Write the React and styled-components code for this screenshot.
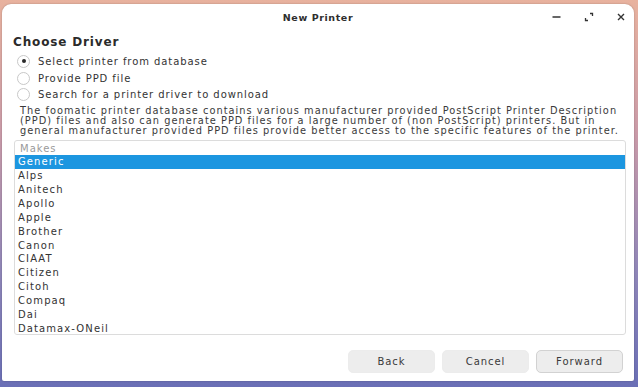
import React from "react";
import styled, { createGlobalStyle } from "styled-components";

const Global = createGlobalStyle`
  html, body { margin: 0; padding: 0; }
  body {
    width: 638px; height: 387px; overflow: hidden;
    background: linear-gradient(180deg, #e8b29e 0%, #c99aa8 35%, #8f86b8 70%, #6a6fb6 100%);
    font-family: "DejaVu Sans", "Liberation Sans", sans-serif;
  }
`;

const Desktop = styled.div`
  width: 638px; height: 387px;
  box-sizing: border-box;
  padding: 4px 4px 6px 2px;
  display: flex;
`;

const Window = styled.div`
  flex: 1;
  background: #ffffff;
  border-radius: 9px 9px 2px 2px;
  display: flex; flex-direction: column;
  box-shadow: 0 0 2px rgba(0,0,0,0.25);
  overflow: hidden;
`;

const TitleBar = styled.div`
  height: 25px;
  display: grid;
  grid-template-columns: 1fr auto 1fr;
  align-items: center;
  padding: 0 8px;
`;

const Title = styled.div`
  grid-column: 2;
  font-size: 9.5px; font-weight: bold; color: #2e2e2e;
  letter-spacing: 0.6px;
  padding-top: 1px;
`;

const Controls = styled.div`
  grid-column: 3;
  justify-self: end;
  display: flex; align-items: center; gap: 23px;
  padding-right: 1px;
  padding-top: 1px;
`;

const Body = styled.div`
  flex: 1;
  display: flex; flex-direction: column;
  padding: 6px 8px 0 11px;
`;

const Heading = styled.div`
  font-size: 12px; font-weight: bold; color: #2b2b2b;
  letter-spacing: 0.85px;
  margin-bottom: 4px;
`;

const RadioRow = styled.label`
  display: flex; align-items: center; gap: 8px;
  height: 16.7px; padding-left: 4px;
  font-size: 10px; letter-spacing: 0.93px; color: #333;
`;

const RadioDot = styled.span`
  width: 13px; height: 13px; border-radius: 50%;
  border: 1px solid #c8c8c8; background: #fff;
  display: flex; align-items: center; justify-content: center;
  box-sizing: border-box;
  &::after {
    content: "";
    width: 4px; height: 4px; border-radius: 50%;
    background: ${p => (p.$on ? "#2a2a2a" : "transparent")};
  }
`;

const Desc = styled.p`
  margin: 3px 0 0 7px;
  font-size: 9.8px; line-height: 10px; color: #3a3a3a;
  letter-spacing: 1.03px;
  white-space: nowrap;
`;

const ListBox = styled.div`
  margin: 4px 0 0 1px;
  border: 1px solid #dcdcdc;
  border-radius: 3px;
  height: 195px;
  box-sizing: border-box;
  overflow: hidden;
`;

const ListHeader = styled.div`
  height: 14px; line-height: 15px;
  padding-left: 5px;
  font-size: 10px; letter-spacing: 1px; color: #9a9a9a;
`;

const Row = styled.div`
  height: 13.92px; line-height: 14.5px;
  padding-left: 3px;
  font-size: 10px; letter-spacing: 1.1px;
  color: ${p => (p.$sel ? "#ffffff" : "#333")};
  background: ${p => (p.$sel ? "#1c96e0" : "transparent")};
`;

const Footer = styled.div`
  display: flex; justify-content: flex-end; gap: 7px;
  padding: 15px 0 0 0;
  margin-right: 3px;
`;

const Button = styled.button`
  width: 87px; height: 23px;
  border-radius: 5px;
  border: 1px solid ${p => (p.$outlined ? "#d2d2d2" : "#ececec")};
  background: #ededed;
  font-family: "DejaVu Sans", sans-serif;
  font-size: 10px; letter-spacing: 0.95px; color: #3a3a3a;
  padding: 0;
`;

const makes = ["Generic", "Alps", "Anitech", "Apollo", "Apple", "Brother", "Canon", "CIAAT", "Citizen", "Citoh", "Compaq", "Dai", "Datamax-ONeil"];

export default function App() {
  return (
    <>
      <Global />
      <Desktop>
        <Window>
          <TitleBar>
            <Title>New Printer</Title>
            <Controls>
              <svg width="9" height="10" viewBox="0 0 9 10"><path d="M0.5 5h8" stroke="#333" strokeWidth="1.4" /></svg>
              <svg width="10" height="10" viewBox="0 0 10 10" fill="none" stroke="#333" strokeWidth="1.3"><path d="M6 1.5h2.5V4M1.5 6v2.5H4" /></svg>
              <svg width="8" height="10" viewBox="0 0 8 10"><path d="M1 2l6 6M7 2l-6 6" stroke="#333" strokeWidth="1.4" /></svg>
            </Controls>
          </TitleBar>
          <Body>
            <Heading>Choose Driver</Heading>
            <RadioRow><RadioDot $on />Select printer from database</RadioRow>
            <RadioRow><RadioDot />Provide PPD file</RadioRow>
            <RadioRow><RadioDot />Search for a printer driver to download</RadioRow>
            <Desc>
              The foomatic printer database contains various manufacturer provided PostScript Printer Description<br />
              (PPD) files and also can generate PPD files for a large number of (non PostScript) printers. But in<br />
              general manufacturer provided PPD files provide better access to the specific features of the printer.
            </Desc>
            <ListBox>
              <ListHeader>Makes</ListHeader>
              {makes.map((m, i) => (
                <Row key={m} $sel={i === 0}>{m}</Row>
              ))}
            </ListBox>
            <Footer>
              <Button>Back</Button>
              <Button>Cancel</Button>
              <Button $outlined>Forward</Button>
            </Footer>
          </Body>
        </Window>
      </Desktop>
    </>
  );
}
